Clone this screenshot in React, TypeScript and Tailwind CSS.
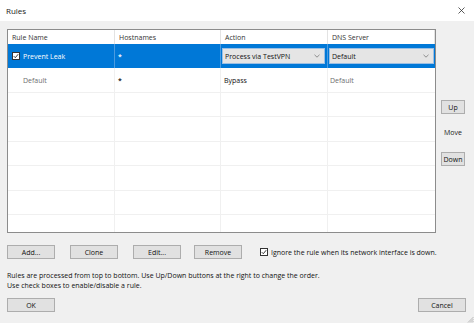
import React from 'react';

const Check = ({ className = '' }: { className?: string }) => (
  <span className={`flex h-[8px] w-[8px] items-center justify-center border border-[#333] bg-white ${className}`}>
    <svg width="6" height="6" viewBox="0 0 6 6">
      <path d="M0.8 3.2 L2.3 4.7 L5.2 1.2" fill="none" stroke="#222" strokeWidth="0.9" />
    </svg>
  </span>
);

const Chevron = () => (
  <svg width="6" height="4" viewBox="0 0 6 4">
    <path d="M0.5 0.8 L3 3.2 L5.5 0.8" fill="none" stroke="#777" strokeWidth="0.8" />
  </svg>
);

const Btn = ({ label, className = '' }: { label: string; className?: string }) => (
  <button className={`flex h-[14px] items-center justify-center border border-[#adadad] bg-[#e1e1e1] text-[7px] leading-none text-[#111] ${className}`}>
    {label}
  </button>
);

const Select = ({ value }: { value: string }) => (
  <div className="flex h-[16px] w-full items-center justify-between border border-[#9cbfe3] bg-[#e5e5e5] pl-[2px] pr-[4px] text-[#111]">
    <span>{value}</span>
    <Chevron />
  </div>
);

const cols = ['w-[107px]', 'w-[106px]', 'w-[107px]', 'w-[107px]'];
const rowHeights = ['h-[24px]', 'h-[25px]', 'h-[24px]', 'h-[25px]', 'h-[24px]', 'h-[25px]', 'h-[24px]', 'h-[25px]'];

export default function App() {
  return (
    <div className="relative h-[323px] w-[474px] overflow-hidden bg-[#f0f0f0] font-['Open_Sans','Noto_Sans',sans-serif] text-[7px] leading-none text-[#111]">
      {/* title bar */}
      <div className="flex h-[21px] items-center justify-between bg-white pl-[6px] pr-[9px]">
        <span className="text-[8px] text-[#222]">Rules</span>
        <svg width="7" height="7" viewBox="0 0 7 7">
          <path d="M0.5 0.5 L6.5 6.5 M6.5 0.5 L0.5 6.5" stroke="#333" strokeWidth="0.8" />
        </svg>
      </div>

      <div className="flex pl-[7px] pt-[8px]">
        {/* rules list */}
        <div className="flex h-[204px] w-[429px] flex-col overflow-hidden border border-[#8c8c8c] bg-white">
          <div className="flex h-[14px] shrink-0 text-[#333]">
            {['Rule Name', 'Hostnames', 'Action', 'DNS Server'].map((h, i) => (
              <div key={h} className={`${cols[i]} flex items-center border-r border-[#e3e3e3] pl-[4px]`}>
                {h}
              </div>
            ))}
          </div>

          {/* selected row */}
          <div className={`flex shrink-0 bg-[#0078d7] ${rowHeights[0]}`}>
            <div className={`${cols[0]} flex items-center gap-[3px] border-r border-[#4a9be0] pl-[4px] text-white`}>
              <Check />
              <span>Prevent Leak</span>
            </div>
            <div className={`${cols[1]} flex items-center border-r border-[#4a9be0] pl-[3px] font-semibold text-white`}>*</div>
            <div className={`${cols[2]} flex items-center border-r border-[#4a9be0] pl-[1px] pr-[2px]`}>
              <Select value="Process via TestVPN" />
            </div>
            <div className={`${cols[3]} flex items-center pl-[1px] pr-[1px]`}>
              <Select value="Default" />
            </div>
          </div>

          <div className={`flex shrink-0 border-b border-[#f0f0f0] ${rowHeights[1]}`}>
            <div className={`${cols[0]} flex items-center border-r border-[#f0f0f0] pl-[15px] text-[#6d6d6d]`}>Default</div>
            <div className={`${cols[1]} flex items-center border-r border-[#f0f0f0] pl-[3px] font-semibold`}>*</div>
            <div className={`${cols[2]} flex items-center border-r border-[#f0f0f0] pl-[3px]`}>Bypass</div>
            <div className={`${cols[3]} flex items-center pl-[2px] text-[#6d6d6d]`}>Default</div>
          </div>

          {rowHeights.slice(2).map((h, r) => (
            <div key={r} className={`flex shrink-0 border-b border-[#f0f0f0] ${h}`}>
              {cols.map((c, i) => (
                <div key={i} className={`${c} ${i < 3 ? 'border-r border-[#f0f0f0]' : ''}`} />
              ))}
            </div>
          ))}
        </div>

        {/* move buttons */}
        <div className="ml-[5px] flex w-[24px] flex-col items-center pt-[71px]">
          <Btn label="Up" className="w-[24px]" />
          <span className="mt-[15px] text-[#222]">Move</span>
          <Btn label="Down" className="mt-[16px] w-[24px]" />
        </div>
      </div>

      {/* action buttons */}
      <div className="mt-[12px] flex items-center pl-[7px]">
        <Btn label="Add..." className="w-[48px]" />
        <Btn label="Clone" className="ml-[15px] w-[48px]" />
        <Btn label="Edit..." className="ml-[15px] w-[48px]" />
        <Btn label="Remove" className="ml-[13px] w-[48px]" />
        <Check className="ml-[18px]" />
        <span className="ml-[3px]">Ignore the rule when its network interface is down.</span>
      </div>

      <div className="mt-[13px] flex flex-col gap-[3px] pl-[7px]">
        <span className="leading-[7px]">Rules are processed from top to bottom. Use Up/Down buttons at the right to change the order.</span>
        <span className="leading-[7px]">Use check boxes to enable/disable a rule.</span>
      </div>

      <div className="mt-[9px] flex justify-between pl-[7px] pr-[8px]">
        <Btn label="OK" className="w-[48px] border-[#0078d7]" />
        <Btn label="Cancel" className="w-[48px]" />
      </div>

      {/* resize grip */}
      <svg className="absolute bottom-0 right-0" width="7" height="7" viewBox="0 0 7 7">
        <path d="M6.5 1 L1 6.5 M6.5 3 L3 6.5 M6.5 5 L5 6.5" stroke="#a0a0a0" strokeWidth="0.7" />
      </svg>
    </div>
  );
}
